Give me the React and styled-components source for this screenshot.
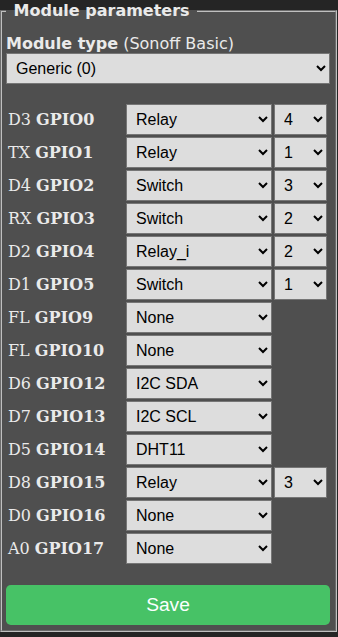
import React from 'react';
import styled, { createGlobalStyle } from 'styled-components';

const GlobalStyle = createGlobalStyle`
  html, body {
    margin: 0;
    padding: 0;
    background: #252525;
  }
  body {
    font-family: "DejaVu Sans", Verdana, sans-serif;
    font-size: 16px;
    color: #eaeaea;
  }
`;

const Panel = styled.fieldset`
  box-sizing: border-box;
  width: 337px;
  margin: 1px 0 0 0;
  padding: 5px 5px 5px 4px;
  border: 2px groove #c0c0c0;
  background: #4f4f4f;
  min-width: 0;
`;

const Legend = styled.legend`
  padding: 0 2px;
  font-weight: bold;
  font-size: 16px;
  color: #eaeaea;
`;

const TypeLine = styled.div`
  margin-top: 9px;
  line-height: 19px;

  b {
    font-weight: bold;
  }
`;

const Select = styled.select`
  display: block;
  box-sizing: border-box;
  width: 100%;
  height: 31px;
  margin: 0;
  padding: 5px;
  font-family: "Liberation Sans", Arial, sans-serif;
  font-size: 16px;
  background: #dddddd;
  color: #000000;
  border: 1px solid #767676;
  border-radius: 0;
`;

const PinTable = styled.div`
  display: flex;
  flex-direction: column;
  gap: 2px;
  margin-top: 18px;
  padding: 2px;
`;

const PinRow = styled.div`
  display: grid;
  grid-template-columns: 116px 146px 53px;
  column-gap: 2px;
  align-items: center;
`;

const PinLabel = styled.div`
  font-family: "DejaVu Serif", "Liberation Serif", serif;
  font-size: 16px;
  color: #eaeaea;
  white-space: nowrap;

  b {
    font-weight: bold;
  }
`;

const SaveButton = styled.button`
  display: block;
  width: 100%;
  margin-top: 19px;
  padding: 1px 6px;
  border: 0;
  border-radius: 0.3rem;
  background: #47c266;
  color: #faffff;
  font-family: "Liberation Sans", Arial, sans-serif;
  font-size: 1.2rem;
  line-height: 2.4rem;
  cursor: pointer;
`;

const pins = [
  { pin: 'D3', gpio: 'GPIO0', fn: 'Relay', idx: '4' },
  { pin: 'TX', gpio: 'GPIO1', fn: 'Relay', idx: '1' },
  { pin: 'D4', gpio: 'GPIO2', fn: 'Switch', idx: '3' },
  { pin: 'RX', gpio: 'GPIO3', fn: 'Switch', idx: '2' },
  { pin: 'D2', gpio: 'GPIO4', fn: 'Relay_i', idx: '2' },
  { pin: 'D1', gpio: 'GPIO5', fn: 'Switch', idx: '1' },
  { pin: 'FL', gpio: 'GPIO9', fn: 'None' },
  { pin: 'FL', gpio: 'GPIO10', fn: 'None' },
  { pin: 'D6', gpio: 'GPIO12', fn: 'I2C SDA' },
  { pin: 'D7', gpio: 'GPIO13', fn: 'I2C SCL' },
  { pin: 'D5', gpio: 'GPIO14', fn: 'DHT11' },
  { pin: 'D8', gpio: 'GPIO15', fn: 'Relay', idx: '3' },
  { pin: 'D0', gpio: 'GPIO16', fn: 'None' },
  { pin: 'A0', gpio: 'GPIO17', fn: 'None' },
];

const functions = ['None', 'Relay', 'Relay_i', 'Switch', 'I2C SDA', 'I2C SCL', 'DHT11'];
const indexes = ['1', '2', '3', '4', '5', '6', '7', '8'];

const App = () => {
  return (
    <>
      <GlobalStyle />
      <Panel>
        <Legend>&nbsp;Module parameters&nbsp;</Legend>
        <TypeLine>
          <b>Module type</b> (Sonoff Basic)
        </TypeLine>
        <Select defaultValue="Generic (0)">
          <option>Sonoff Basic (1)</option>
          <option>Generic (0)</option>
        </Select>

        <PinTable>
          {pins.map((p) => (
            <PinRow key={p.gpio}>
              <PinLabel>
                {p.pin} <b>{p.gpio}</b>
              </PinLabel>
              <Select defaultValue={p.fn}>
                {functions.map((f) => (
                  <option key={f}>{f}</option>
                ))}
              </Select>
              {p.idx && (
                <Select defaultValue={p.idx}>
                  {indexes.map((i) => (
                    <option key={i}>{i}</option>
                  ))}
                </Select>
              )}
            </PinRow>
          ))}
        </PinTable>

        <SaveButton type="button">Save</SaveButton>
      </Panel>
    </>
  );
};

export default App;
